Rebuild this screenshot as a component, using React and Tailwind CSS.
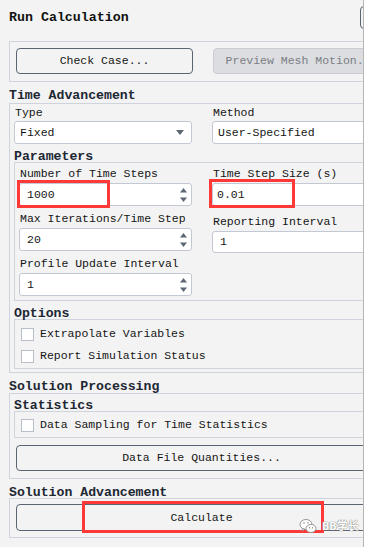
import React from "react";

const arrow = "#5d6673";

function Header({ children, className = "" }) {
  return (
    <div className={"whitespace-nowrap text-[13.2px] font-bold leading-[14px] text-[#1d2733] " + className}>
      {children}
    </div>
  );
}

function Field({ value, className = "", children }) {
  return (
    <div className={"relative flex items-center justify-between rounded-[3px] border border-[#c3c9d4] bg-white " + className}>
      <span>{value}</span>
      {children}
    </div>
  );
}

function Spin() {
  return (
    <svg width="9" height="18" viewBox="0 0 9 18" className="mr-[3px]">
      <path d="M4.5 2 L8 6.5 L1 6.5 Z" fill={arrow} />
      <path d="M1 11.5 L8 11.5 L4.5 16 Z" fill={arrow} />
    </svg>
  );
}

function Check({ label }) {
  return (
    <div className="flex h-[22px] items-center gap-[6px] pl-[6px]">
      <div className="h-[13px] w-[13px] border border-[#b9bfc9] bg-white" />
      <span className="whitespace-nowrap">{label}</span>
    </div>
  );
}

function Btn({ children, className = "" }) {
  return (
    <div className={"relative flex items-center justify-center whitespace-nowrap rounded-[4px] border " + className}>
      {children}
    </div>
  );
}

function Label({ children, className = "" }) {
  return <div className={"flex items-center whitespace-nowrap pl-px " + className}>{children}</div>;
}

export default function App() {
  return (
    <div className="flex h-[547px] w-[367px] bg-white font-['Liberation_Mono','DejaVu_Sans_Mono',monospace] text-[11.5px] text-[#151515]">
      <div className="relative h-full w-[364px] overflow-hidden border-r border-[#b6b6b6] bg-[#f3f3f3]">
        <div className="w-[392px]">
          {/* title */}
          <div className="flex h-[34px] items-center">
            <div className="w-[360px] pl-[9px] pt-[2px] text-[13.3px] font-bold text-[#111]">Run Calculation</div>
            <div className="h-[23px] w-[16px] rounded-[4px] border border-[#5a6472]" />
          </div>

          {/* check case */}
          <div className="ml-[9px] mt-[7px] flex gap-[20px] border border-[#cfd3dc] pb-[7px] pl-[6px] pt-[6px]">
            <Btn className="h-[26px] w-[177px] border-[#5a6472]">Check Case...</Btn>
            <Btn className="h-[26px] w-[177px] border-[#c9ccd3] bg-[#dcdde1] text-[#7b7e84]">Preview Mesh Motion...</Btn>
          </div>

          {/* time advancement */}
          <Header className="h-[21px] pl-[9px] pt-[7px]">Time Advancement</Header>
          <div className="ml-[9px] border border-[#cfd3dc] pb-[3px] pl-[4px]">
            <div className="flex gap-[20px]">
              <div className="w-[178px]">
                <Label className="h-[17px] pt-[1px]">Type</Label>
                <Field value="Fixed" className="h-[23px] pl-[5px] pr-[7px]">
                  <svg width="8" height="5" viewBox="0 0 8 5">
                    <path d="M0 0 L8 0 L4 5 Z" fill={arrow} />
                  </svg>
                </Field>
              </div>
              <div className="w-[170px]">
                <Label className="h-[17px] pt-[1px]">Method</Label>
                <Field value="User-Specified" className="h-[23px] pl-[5px]" />
              </div>
            </div>

            <Header className="h-[18px] pt-[6px]">Parameters</Header>
            <div className="flex gap-[20px] border border-[#cfd3dc] pb-[4px] pl-[4px]">
              <div className="flex w-[173px] flex-col gap-[2px]">
                <div>
                  <Label className="h-[20px] pt-[1px]">Number of Time Steps</Label>
                  <Field value="1000" className="h-[23px] pl-[7px]">
                    <Spin />
                    <div className="absolute -left-[3px] -top-[4px] h-[28px] w-[93px] border-[3px] border-[#ff3838]" />
                  </Field>
                </div>
                <div>
                  <Label className="h-[20px] pt-[1px]">Max Iterations/Time Step</Label>
                  <Field value="20" className="h-[23px] pl-[7px]">
                    <Spin />
                  </Field>
                </div>
                <div>
                  <Label className="h-[20px] pt-[1px]">Profile Update Interval</Label>
                  <Field value="1" className="h-[23px] pl-[7px]">
                    <Spin />
                  </Field>
                </div>
              </div>
              <div className="flex w-[160px] flex-col gap-[5px]">
                <div>
                  <Label className="h-[20px] pt-[2px]">Time Step Size (s)</Label>
                  <Field value="0.01" className="h-[23px] pl-[4px]">
                    <div className="absolute -left-[4px] -top-[5px] h-[29px] w-[86px] border-[3px] border-[#ff3838]" />
                  </Field>
                </div>
                <div>
                  <Label className="h-[20px] pt-[1px]">Reporting Interval</Label>
                  <Field value="1" className="h-[22px] pl-[7px]" />
                </div>
              </div>
            </div>

            <Header className="h-[18px] pt-[6px]">Options</Header>
            <div className="border border-[#cfd3dc] pb-px pt-[3px]">
              <Check label="Extrapolate Variables" />
              <Check label="Report Simulation Status" />
            </div>
          </div>

          {/* solution processing */}
          <Header className="h-[20px] pl-[9px] pt-[7px]">Solution Processing</Header>
          <div className="ml-[9px] border border-[#cfd3dc] pb-[7px] pl-[4px]">
            <Header className="h-[17px] pt-[5px]">Statistics</Header>
            <div className="border border-[#cfd3dc] pb-px pt-[2px]">
              <Check label="Data Sampling for Time Statistics" />
            </div>
            <Btn className="ml-[2px] mt-[7px] h-[26px] w-[371px] border-[#5a6472]">Data File Quantities...</Btn>
          </div>

          {/* solution advancement */}
          <Header className="h-[19px] pl-[9px] pt-[7px]">Solution Advancement</Header>
          <div className="ml-[9px] border border-[#cfd3dc] pb-[6px] pl-[6px] pt-[5px]">
            <Btn className="h-[27px] w-[371px] border-[#5a6472]">
              Calculate
              <div className="absolute -top-[4px] left-[65px] h-[32px] w-[242px] border-[3px] border-[#ff3838]" />
            </Btn>
          </div>
        </div>

        {/* watermark */}
        <div className="absolute left-[299px] top-[518px] flex items-center gap-[5px]">
          <svg width="18" height="16" viewBox="0 0 18 16">
            <ellipse cx="7" cy="6.5" rx="6" ry="5" fill="#fff" stroke="#8a8a8a" strokeWidth="0.9" />
            <path d="M3.5 10.5 L3 13 L6 11.3 Z" fill="#fff" stroke="#8a8a8a" strokeWidth="0.8" />
            <ellipse cx="12" cy="10.5" rx="5" ry="4" fill="#fff" stroke="#8a8a8a" strokeWidth="0.9" />
            <circle cx="5" cy="5" r="0.8" fill="#8a8a8a" />
            <circle cx="9" cy="5" r="0.8" fill="#8a8a8a" />
            <circle cx="10.5" cy="9.8" r="0.7" fill="#8a8a8a" />
            <circle cx="13.5" cy="9.8" r="0.7" fill="#8a8a8a" />
          </svg>
          <span className="font-['Noto_Sans','Noto_Sans_CJK_SC',sans-serif] text-[11px] font-bold text-white [text-shadow:0_0_1px_#777,0_0_1px_#777]">
            BB学长
          </span>
        </div>
      </div>
    </div>
  );
}
